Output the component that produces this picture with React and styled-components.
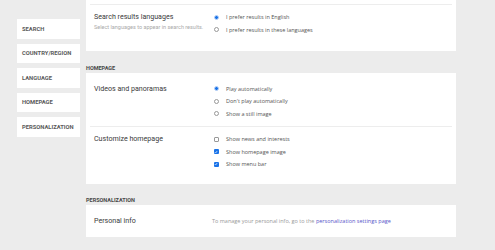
import React from 'react';
import styled, { createGlobalStyle } from 'styled-components';

const GlobalStyle = createGlobalStyle`
  body {
    margin: 0;
    background-color: #ececec;
    font-family: Roboto, "Liberation Sans", sans-serif;
  }
`;

const Page = styled.div`
  display: flex;
  align-items: flex-start;
  gap: 6px;
  padding-left: 17px;
  height: 250px;
  overflow: hidden;
`;

const Nav = styled.nav`
  display: flex;
  flex-direction: column;
  gap: 5px;
  width: 63px;
  padding-top: 19px;
`;

const NavItem = styled.div`
  display: flex;
  align-items: center;
  height: 19.5px;
  padding-left: 5px;
  background-color: #fff;
  font-size: 5.8px;
  font-weight: 700;
  color: #5a5a5a;
  text-transform: uppercase;
`;

const Main = styled.main`
  display: flex;
  flex-direction: column;
  width: 370px;
`;

const SectionTitle = styled.h3`
  margin: 12.5px 0 1px;
  height: 8px;
  line-height: 8px;
  font-size: 5.5px;
  font-weight: 700;
  color: #484848;
  text-transform: uppercase;
`;

const Card = styled.section`
  background-color: #fff;
  padding: 4px 4px ${(p) => p.$bottom ?? 7}px;
`;

const Row = styled.div`
  display: grid;
  grid-template-columns: 118px 1fr;
  padding: 6px 4px;
  border-top: ${(p) => (p.$divided ? '1px solid #ededed' : 'none')};
`;

const Label = styled.div`
  display: flex;
  flex-direction: column;
`;

const Title = styled.div`
  font-size: 7.1px;
  line-height: 12.5px;
  color: #3a3a3a;
`;

const Hint = styled.div`
  font-size: 5.5px;
  line-height: 7px;
  color: #aaa;
`;

const Options = styled.div`
  display: flex;
  flex-direction: column;
`;

const Option = styled.div`
  display: flex;
  align-items: center;
  gap: 7.5px;
  height: 12.5px;
  padding-left: 1.5px;
  font-family: "Open Sans", "Liberation Sans", sans-serif;
  font-size: 5.5px;
  color: #555;
`;

const Radio = styled.span`
  box-sizing: border-box;
  width: 5px;
  height: 5px;
  border-radius: 50%;
  border: ${(p) => (p.$on ? '1px solid #bcd4f7' : '0.7px solid #999')};
  background-color: ${(p) => (p.$on ? '#1a73e8' : '#fff')};
`;

const Check = styled.span`
  box-sizing: border-box;
  display: flex;
  align-items: center;
  justify-content: center;
  width: 5px;
  height: 5px;
  border-radius: 1px;
  border: ${(p) => (p.$on ? 'none' : '0.7px solid #999')};
  background-color: ${(p) => (p.$on ? '#1a73e8' : '#fff')};
`;

const Text = styled.div`
  align-self: center;
  font-family: "Open Sans", "Liberation Sans", sans-serif;
  font-size: 5.5px;
  color: #999;
`;

const Link = styled.a`
  color: #5856c9;
  text-decoration: none;
`;

const Tick = () => (
  <svg width="4" height="4" viewBox="0 0 10 10">
    <path d="M2 5.5l2 2 4-5" fill="none" stroke="#fff" strokeWidth="1.6" />
  </svg>
);

const navItems = ['Search', 'Country/Region', 'Language', 'Homepage', 'Personalization'];

const App = () => {
  return (
    <>
      <GlobalStyle />
      <Page>
        <Nav>
          {navItems.map((n) => (
            <NavItem key={n}>{n}</NavItem>
          ))}
        </Nav>
        <Main>
          <Card $bottom={9}>
            <Row $divided>
              <Label>
                <Title>Search results languages</Title>
                <Hint>Select languages to appear in search results.</Hint>
              </Label>
              <Options>
                <Option><Radio $on />I prefer results in English</Option>
                <Option><Radio />I prefer results in these languages</Option>
              </Options>
            </Row>
          </Card>

          <SectionTitle>Homepage</SectionTitle>
          <Card>
            <Row>
              <Label>
                <Title>Videos and panoramas</Title>
              </Label>
              <Options>
                <Option><Radio $on />Play automatically</Option>
                <Option><Radio />Don't play automatically</Option>
                <Option><Radio />Show a still image</Option>
              </Options>
            </Row>
            <Row $divided>
              <Label>
                <Title>Customize homepage</Title>
              </Label>
              <Options>
                <Option><Check />Show news and interests</Option>
                <Option><Check $on><Tick /></Check>Show homepage image</Option>
                <Option><Check $on><Tick /></Check>Show menu bar</Option>
              </Options>
            </Row>
          </Card>

          <SectionTitle>Personalization</SectionTitle>
          <Card $bottom={3.5}>
            <Row>
              <Label>
                <Title>Personal info</Title>
              </Label>
              <Text>
                To manage your personal info, go to the{' '}
                <Link href="#">personalization settings page</Link>
              </Text>
            </Row>
          </Card>
        </Main>
      </Page>
    </>
  );
};

export default App;
